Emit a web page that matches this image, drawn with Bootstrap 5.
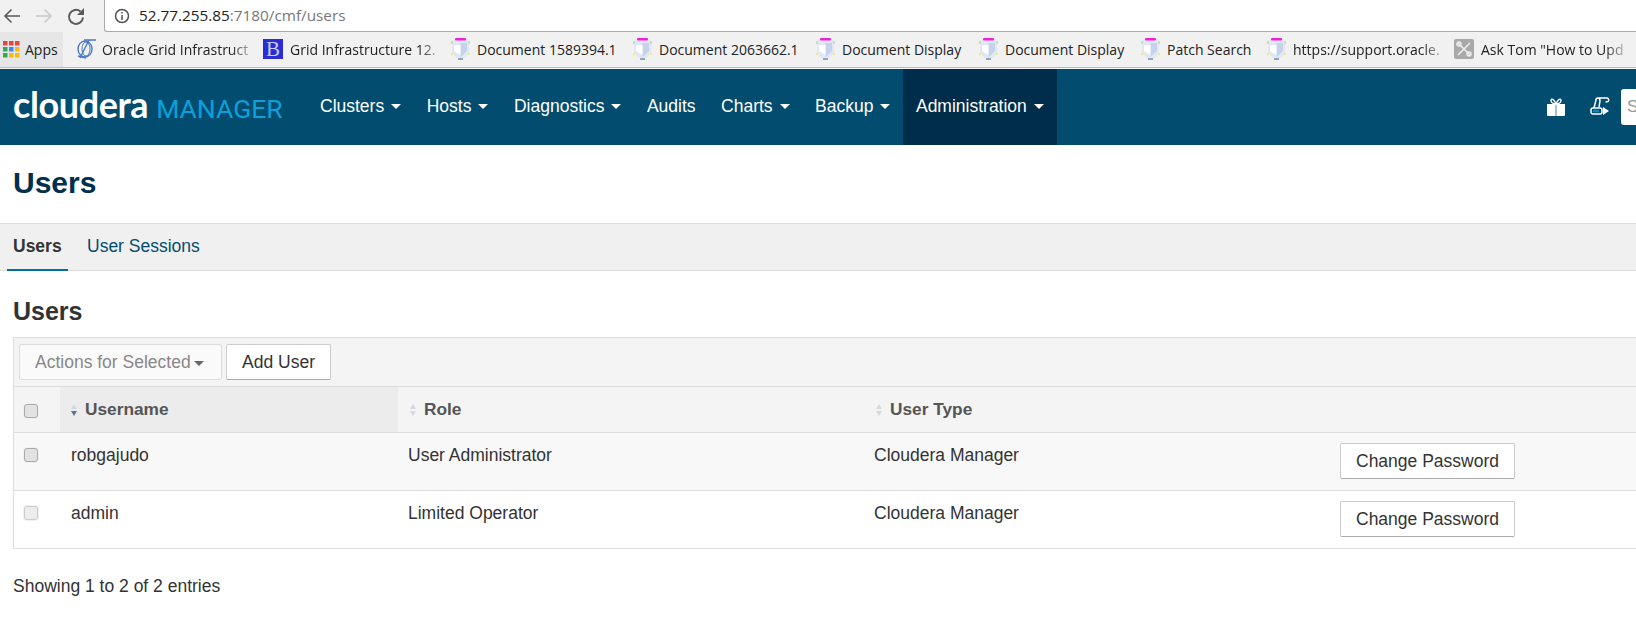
<!DOCTYPE html>
<html lang="en">
<head>
  <meta charset="UTF-8">
  <title>Users</title>
  <link href="https://cdn.jsdelivr.net/npm/bootstrap@5.3.2/dist/css/bootstrap.min.css" rel="stylesheet">
  <style>
    html, body { height: 642px; overflow: hidden; }
    body { font-family: "Liberation Sans", Arial, sans-serif; color: #333; background: #fff; font-size: 17.5px; }

    /* browser chrome */
    .chrome-top { height: 32px; background: #f1f1f1; }
    .chrome-btns { width: 104px; padding-left: 3px; gap: 14px; }
    .addr { background: #fff; border-left: 1px solid #aaa; border-bottom: 1px solid #aaa; border-bottom-left-radius: 3px; padding-left: 9px; gap: 9px; font-family: "Open Sans", sans-serif; font-size: 15.3px; color: #777; }
    .addr b { font-weight: 400; color: #222; }
    .bm-bar { height: 36px; background: #f1f1f1; border-bottom: 1px solid #bbb; font-family: "Open Sans", sans-serif; font-size: 14px; color: #222; white-space: nowrap; }
    .bm { gap: 7px; height: 35px; flex: none; overflow: hidden; padding-bottom: 1px; }
    .bm-apps { width: 63px; padding-left: 3px; gap: 5px; background: #e6e6e6; margin-right: 13px; }
    .bm-a { width: 187px; gap: 6px; } .bm-b { width: 188px; } .bm-c { width: 182px; } .bm-d { width: 183px; }
    .bm-e { width: 163px; } .bm-f { width: 162px; } .bm-g { width: 126px; } .bm-h { width: 187px; } .bm-i { width: 182px; }
    .bm-fade span { width: 100%; overflow: hidden; -webkit-mask-image: linear-gradient(to right, #000 80%, transparent 97%); mask-image: linear-gradient(to right, #000 80%, transparent 97%); }

    /* app navbar */
    .cm-nav { height: 77px; background: #024d6f; padding: 0 0 0 13px; border-top: 1px solid #f4f4f4; }
    .cm-logo { width: 269px; margin-right: 25.25px; margin-bottom: 6px; gap: 8px; line-height: 1; align-items: baseline; }
    .cm-logo b { font-family: "Lato", sans-serif; font-size: 36px; font-weight: 700; color: #fff; letter-spacing: -0.4px; }
    .cm-logo span { font-family: "Roboto", sans-serif; font-size: 26.5px; color: #0ca0d8; }
    .cm-link { color: #fff; text-decoration: none; font-size: 17.5px; height: 76px; padding: 0 12.75px 2px; gap: 7px; }
    .cm-link:hover { color: #fff; }
    .cm-active { background: #002d4a; }
    .cm-caret { border-left: 5px solid transparent; border-right: 5px solid transparent; border-top: 5px solid #fff; }
    .cm-search { width: 15px; height: 36px; background: #fff; border-radius: 3px 0 0 3px; padding: 5px 0 0 6px; color: #999; font-size: 17px; margin-left: 11px; overflow: hidden; }

    /* page */
    .page-ttl { font-size: 30px; font-weight: 700; color: #00304d; margin: 0; height: 78px; padding: 22px 0 0 13px; line-height: 32px; }
    .subtabs { height: 48px; background: #f0f0f0; border-top: 1px solid #ddd; border-bottom: 1px solid #ddd; padding-left: 7px; }
    .subtab { padding: 9px 6px 0; font-size: 17.5px; text-decoration: none; color: #024d6f; height: 47px; }
    .subtab-on { font-weight: 700; color: #333; border-bottom: 2px solid #02709f; width: 61px; margin-right: 13px; }
    .sec-ttl { font-size: 25px; font-weight: 700; color: #333; margin: 0; height: 66px; padding: 26px 0 0 13px; line-height: 29px; }

    .usr-box { margin-left: 13px; border: 1px solid #ddd; border-right: 0; }
    .usr-tools { height: 48px; background: #f4f4f4; padding: 6px 5px 0; gap: 4px; }
    .usr-btn { height: 36px; background: #fff; border: 1px solid #ccc; border-bottom-color: #aaa; border-radius: 2px; color: #333; font-size: 17.5px; padding: 0; }
    .usr-btn-off { width: 203px; padding-left: 15px; background: #fafafa; border-color: #ddd; color: #888; gap: 3px; }
    .usr-btn-off i { border-left: 5px solid transparent; border-right: 5px solid transparent; border-top: 5px solid #666; margin-top: 2px; }
    .usr-add { width: 105px; }
    .usr-table { table-layout: fixed; width: 100%; border-collapse: collapse; margin: 0; }
    .usr-table th, .usr-table td { border-top: 1px solid #ddd; padding: 0; vertical-align: top; }
    .usr-table th { height: 46px; background: #f4f4f4; font-size: 17.3px; color: #555; vertical-align: middle; }
    .usr-table td { height: 58px; font-size: 17.5px; padding-top: 9px; }
    .usr-table tbody tr:first-child td { background: #f8f8f8; }
    .usr-table tbody tr:last-child td { height: 57px; }
    .usr-check { width: 46px; padding-left: 10px !important; }
    .usr-col-name { width: 338px; }
    .usr-col-role { width: 466px; }
    .usr-col-type { width: 466px; }
    .usr-sorted { background: #ececec !important; }
    .usr-cell-a { padding-left: 11px !important; }
    .usr-cell-b { padding-left: 10px !important; }
    .usr-th { gap: 7px; }
    .usr-th-a { padding-left: 10px; }
    .usr-th-b { padding-left: 11px; }
    .usr-box-chk { display: block; width: 14px; height: 14px; background: #e2e2e2; border: 1px solid #aaa; border-radius: 3px; box-shadow: 0 0 0 1px #f0f0f0; margin-top: 2px; }
    .usr-box-dim { background: #ededed; border-color: #ccc; }
    .usr-table td.usr-check { padding-top: 13px; }
    .usr-table td.usr-act { padding-top: 10px; padding-left: 10px; }
    .usr-pw { width: 175px; }
    .usr-foot { padding: 24px 0 0 13px; font-size: 17.5px; }
  </style>
</head>
<body>

<!-- browser toolbar -->
<div class="chrome-top d-flex">
  <div class="chrome-btns d-flex align-items-center">
    <svg width="18" height="16" viewBox="0 0 18 16" fill="none" stroke="#5a5a5a" stroke-width="1.600"><path d="M17 8H2M8.500 1.500 2 8l6.500 6.500"/></svg>
    <svg width="18" height="16" viewBox="0 0 18 16" fill="none" stroke="#c8c8c8" stroke-width="1.600"><path d="M1 8h15M9.500 1.500 16 8l-6.500 6.500"/></svg>
    <svg width="19" height="19" viewBox="0 0 19 19" fill="none" stroke="#5a5a5a" stroke-width="2"><path d="M16 10.500A7 7 0 1 1 13.500 4.500"/><path d="M17 1v7h-7z" fill="#5a5a5a" stroke="none"/></svg>
  </div>
  <div class="addr flex-grow-1 d-flex align-items-center">
    <svg width="16" height="16" viewBox="0 0 16 16" fill="none" stroke="#555" stroke-width="1.500"><circle cx="8" cy="8" r="6.500"/><path d="M8 7v5M8 4v1.600"/></svg>
    <div><b>52.77.255.85</b>:7180/cmf/users</div>
  </div>
</div>

<!-- bookmarks -->
<div class="bm-bar d-flex">
  <div class="bm bm-apps d-flex align-items-center">
    <svg width="17" height="17" viewBox="0 0 17 17"><rect width="4.500" height="4.500" fill="#e8453c"/><rect x="6" width="4.500" height="4.500" fill="#e8453c"/><rect x="12" width="4.500" height="4.500" fill="#e8453c"/><rect y="6" width="4.500" height="4.500" fill="#34a853"/><rect x="6" y="6" width="4.500" height="4.500" fill="#4285f4"/><rect x="12" y="6" width="4.500" height="4.500" fill="#fbbc05"/><rect y="12" width="4.500" height="4.500" fill="#34a853"/><rect x="6" y="12" width="4.500" height="4.500" fill="#fbbc05"/><rect x="12" y="12" width="4.500" height="4.500" fill="#fbbc05"/></svg>
    <span>Apps</span>
  </div>
  <div class="bm bm-a bm-fade d-flex align-items-center">
    <svg class="flex-shrink-0" width="20" height="20" viewBox="0 0 20 20" fill="none" stroke="#4a78c4" stroke-width="1.400"><ellipse cx="9" cy="10" rx="7" ry="8"/><ellipse cx="10" cy="10" rx="4" ry="7" stroke-width="1"/><path d="M4 19 13 1M8 1h12M2 17l8 2"/></svg>
    <span>Oracle Grid Infrastruct</span>
  </div>
  <div class="bm bm-b bm-fade d-flex align-items-center">
    <svg class="flex-shrink-0" width="20" height="20" viewBox="0 0 20 20"><rect width="20" height="20" fill="#2a2ed0"/><text x="10" y="17" text-anchor="middle" font-family="Liberation Serif" font-size="21" fill="#c6ccff">B</text></svg>
    <span>Grid Infrastructure 12.</span>
  </div>
  <div class="bm bm-c d-flex align-items-center">
    <svg width="19" height="22" viewBox="0 0 19 22"><use href="#shield"/></svg><span>Document 1589394.1</span>
  </div>
  <div class="bm bm-d d-flex align-items-center">
    <svg width="19" height="22" viewBox="0 0 19 22"><use href="#shield"/></svg><span>Document 2063662.1</span>
  </div>
  <div class="bm bm-e d-flex align-items-center">
    <svg width="19" height="22" viewBox="0 0 19 22"><use href="#shield"/></svg><span>Document Display</span>
  </div>
  <div class="bm bm-f d-flex align-items-center">
    <svg width="19" height="22" viewBox="0 0 19 22"><use href="#shield"/></svg><span>Document Display</span>
  </div>
  <div class="bm bm-g d-flex align-items-center">
    <svg width="19" height="22" viewBox="0 0 19 22"><use href="#shield"/></svg><span>Patch Search</span>
  </div>
  <div class="bm bm-h bm-fade d-flex align-items-center">
    <svg class="flex-shrink-0" width="19" height="22" viewBox="0 0 19 22"><use href="#shield"/></svg><span>https://support.oracle.</span>
  </div>
  <div class="bm bm-i bm-fade d-flex align-items-center">
    <svg class="flex-shrink-0" width="20" height="20" viewBox="0 0 20 20" fill="none" stroke="#eee" stroke-width="1.500"><rect width="20" height="20" rx="2" fill="#a9a9a9" stroke="none"/><path d="M4 4l12 12M16 4 4 16"/><circle cx="5" cy="5" r="2"/><circle cx="15" cy="15" r="2"/></svg>
    <span>Ask Tom "How to Upd</span>
  </div>
</div>
<svg width="0" height="0" class="d-block"><defs><g id="shield"><path d="M1 4q0-2 2-2h13q2 0 2 2v11q-3 5-8.500 6Q4 20 1 15z" fill="#e2e7f6"/><path d="M9.500 5h6.500v8l-6.500 6z" fill="#c6d1ec"/><path d="M3 7h6.500v10L3 13z" fill="#fff"/><rect x="4" y="0" width="11" height="2.500" rx="1" fill="#f020d8"/><rect x="0" y="3" width="2" height="3" fill="#bfe6a8"/><rect x="17" y="3" width="2" height="3" fill="#bfe6a8"/><rect x="17" y="15" width="2" height="2" fill="#f4f060"/><rect x="0" y="15" width="2" height="2" fill="#f4f060"/><rect x="7" y="20" width="5" height="2" fill="#8aa8b8"/></g></defs></svg>

<!-- cloudera manager nav -->
<nav class="cm-nav d-flex align-items-center">
  <div class="cm-logo d-flex"><b>cloudera</b><span>MANAGER</span></div>
  <a class="cm-link d-flex align-items-center" href="#">Clusters <i class="cm-caret"></i></a>
  <a class="cm-link d-flex align-items-center" href="#">Hosts <i class="cm-caret"></i></a>
  <a class="cm-link d-flex align-items-center" href="#">Diagnostics <i class="cm-caret"></i></a>
  <a class="cm-link d-flex align-items-center" href="#">Audits</a>
  <a class="cm-link d-flex align-items-center" href="#">Charts <i class="cm-caret"></i></a>
  <a class="cm-link d-flex align-items-center" href="#">Backup <i class="cm-caret"></i></a>
  <a class="cm-link cm-active d-flex align-items-center" href="#">Administration <i class="cm-caret"></i></a>
  <div class="ms-auto d-flex align-items-center">
    <svg width="20" height="18" viewBox="0 0 20 18" fill="#fff" class="me-4"><path d="M1 6h18v11a1 1 0 0 1-1 1H2a1 1 0 0 1-1-1z"/><path d="M10 6V18" stroke="#024d6f" stroke-width=".7"/><path d="M10 6C8 1 5 0 5 2.500S8 6 10 6c2 0 5-1 5-3.500S12 1 10 6z" fill="none" stroke="#fff" stroke-width="1.400"/></svg>
    <svg width="20" height="20" viewBox="0 0 20 20" fill="none" stroke="#fff" stroke-width="1.500"><path d="M4 11 6 3a2 2 0 0 1 2-2h9a2 2 0 0 1 1 3.500l-2.500.5M8 1c2 0 2 2 2 3l-1 6"/><rect x="1" y="11" width="11" height="6" rx="2"/><path d="M3 14h6" stroke-width="2.500" stroke="#0a86c0"/><path d="M13 10l6 4-6 4z" fill="#fff" stroke="none"/></svg>
    <div class="cm-search">S</div>
  </div>
</nav>

<h1 class="page-ttl">Users</h1>

<div class="subtabs d-flex">
  <a class="subtab subtab-on" href="#">Users</a>
  <a class="subtab" href="#">User Sessions</a>
</div>

<h2 class="sec-ttl">Users</h2>

<div class="usr-box">
  <div class="usr-tools d-flex">
    <button class="usr-btn usr-btn-off d-flex align-items-center" type="button">Actions for Selected <i></i></button>
    <button class="usr-btn usr-add" type="button">Add User</button>
  </div>
  <table class="usr-table">
    <thead>
      <tr>
        <th class="usr-check"><span class="usr-box-chk"></span></th>
        <th class="usr-col-name usr-sorted"><div class="usr-th usr-th-a d-flex align-items-center"><svg width="8" height="14" viewBox="0 0 8 14"><path d="M4 1 7 6H1z" fill="#d5d9de"/><path d="M4 13 7 8H1z" fill="#5d7690"/></svg>Username</div></th>
        <th class="usr-col-role"><div class="usr-th usr-th-b d-flex align-items-center"><svg width="8" height="14" viewBox="0 0 8 14" fill="#d5d9de"><path d="M4 1 7 6H1zM4 13 7 8H1z"/></svg>Role</div></th>
        <th class="usr-col-type"><div class="usr-th usr-th-b d-flex align-items-center"><svg width="8" height="14" viewBox="0 0 8 14" fill="#d5d9de"><path d="M4 1 7 6H1zM4 13 7 8H1z"/></svg>User Type</div></th>
        <th></th>
      </tr>
    </thead>
    <tbody>
      <tr>
        <td class="usr-check"><span class="usr-box-chk"></span></td>
        <td class="usr-cell-a">robgajudo</td>
        <td class="usr-cell-b">User Administrator</td>
        <td class="usr-cell-b">Cloudera Manager</td>
        <td class="usr-act"><button class="usr-btn usr-pw" type="button">Change Password</button></td>
      </tr>
      <tr>
        <td class="usr-check"><span class="usr-box-chk usr-box-dim"></span></td>
        <td class="usr-cell-a">admin</td>
        <td class="usr-cell-b">Limited Operator</td>
        <td class="usr-cell-b">Cloudera Manager</td>
        <td class="usr-act"><button class="usr-btn usr-pw" type="button">Change Password</button></td>
      </tr>
    </tbody>
  </table>
</div>

<div class="usr-foot">Showing 1 to 2 of 2 entries</div>

<script src="https://cdn.jsdelivr.net/npm/bootstrap@5.3.2/dist/js/bootstrap.bundle.min.js"></script>
</body>
</html>
